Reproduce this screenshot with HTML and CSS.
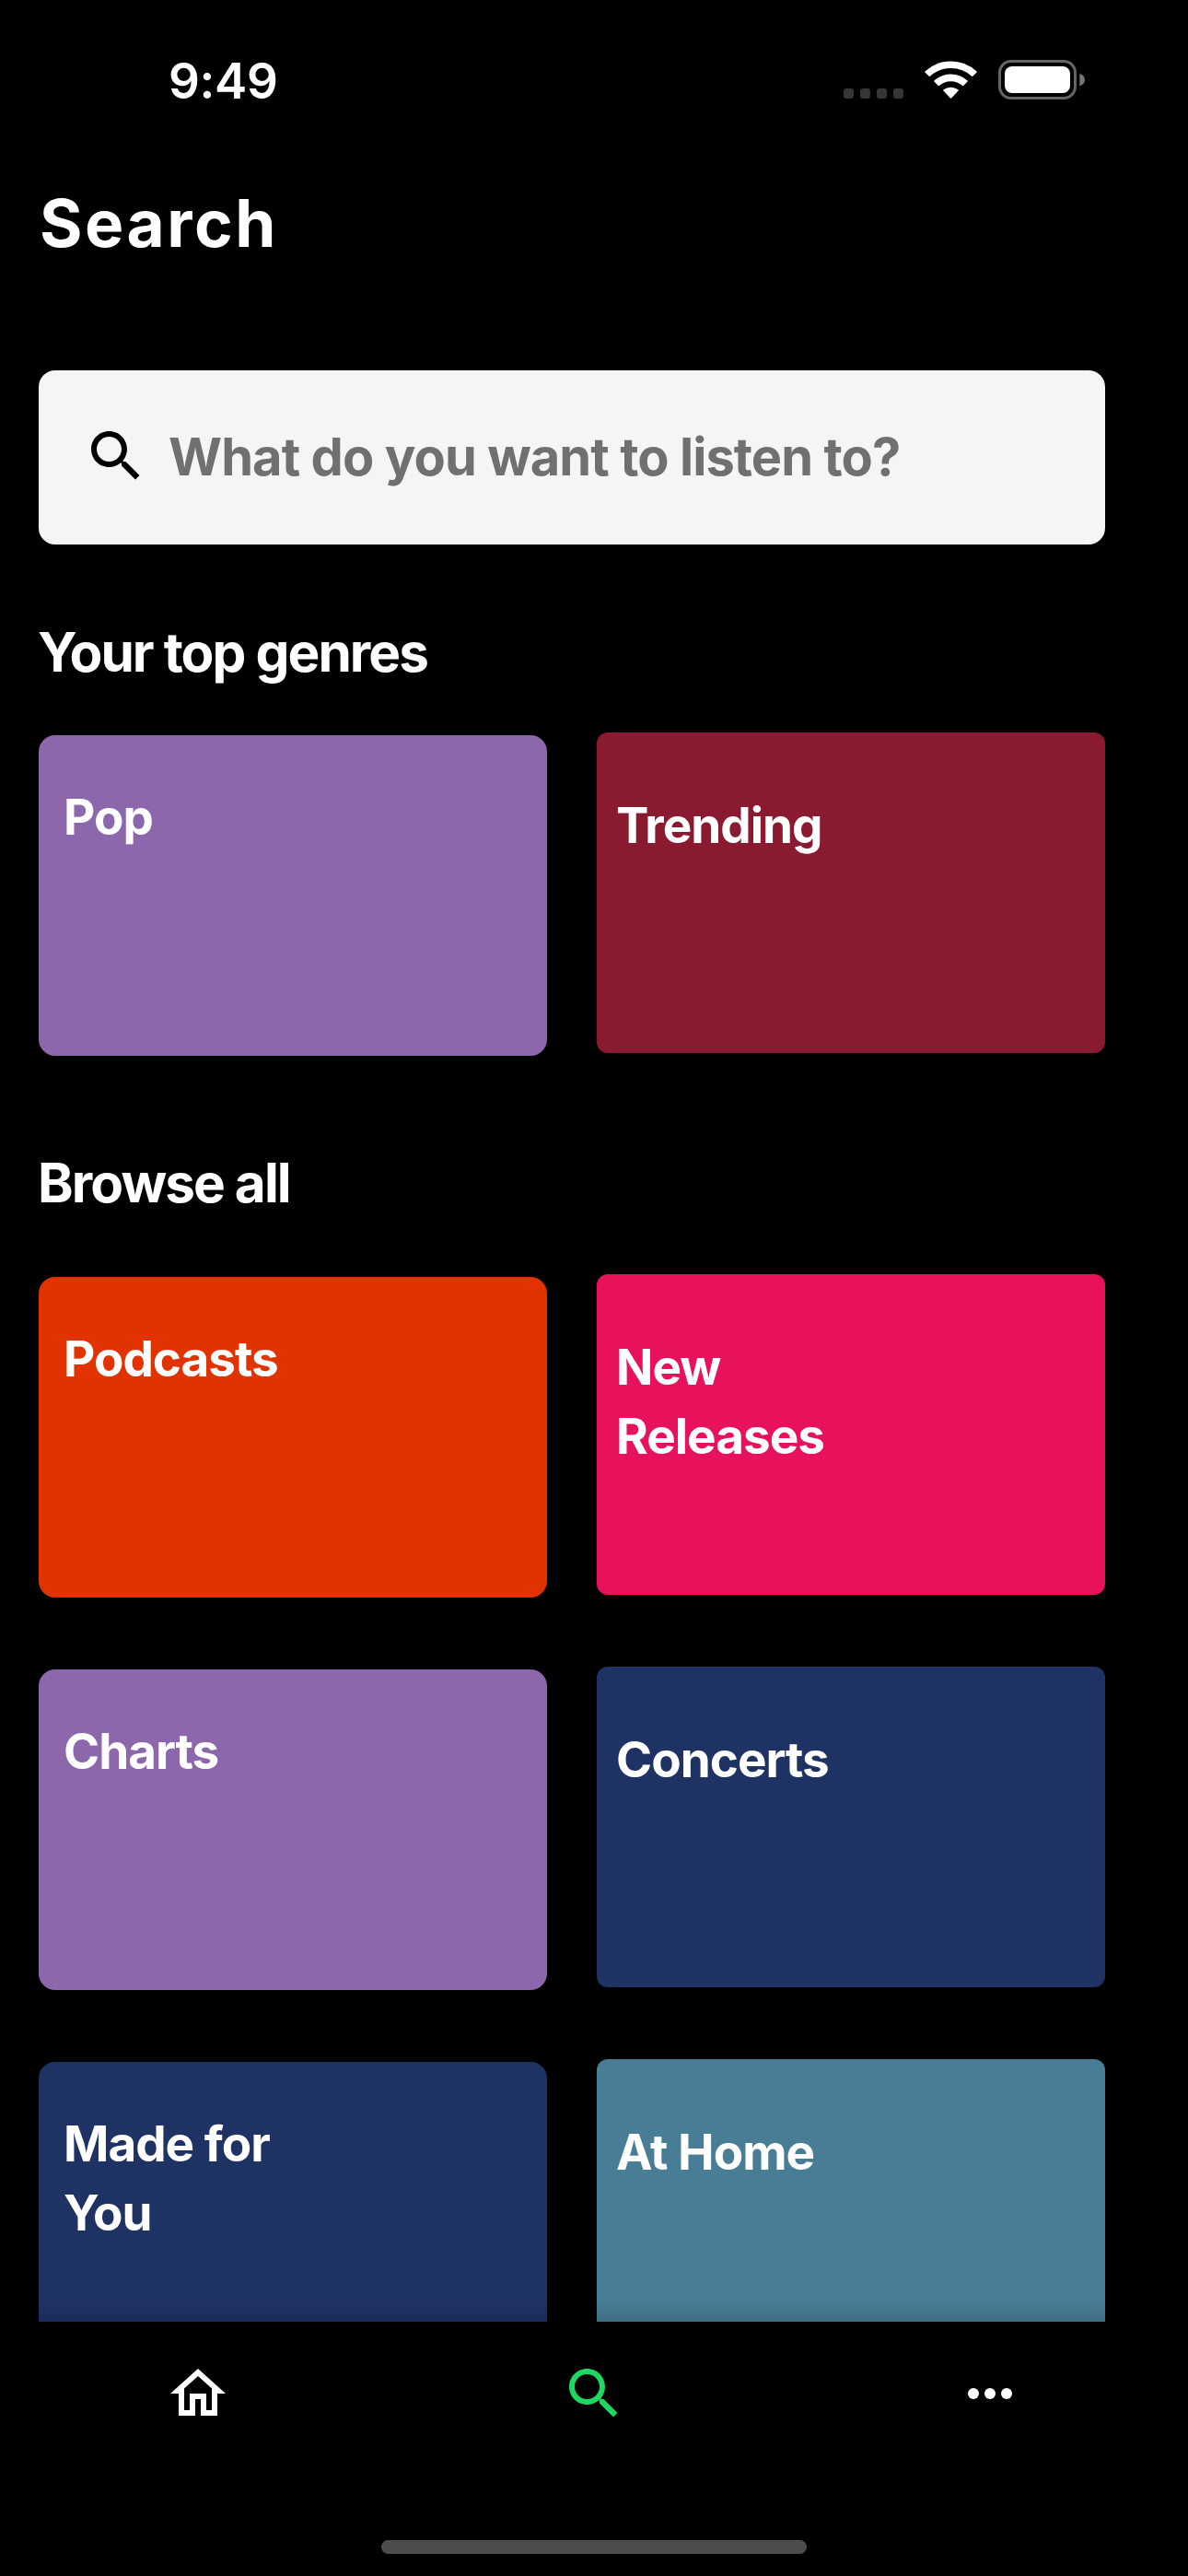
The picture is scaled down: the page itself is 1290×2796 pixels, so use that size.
FILE: index.html
```html
<!DOCTYPE html>
<html lang="en">
<head>
<meta charset="utf-8">
<title>Search</title>
<link rel="stylesheet" href="styles.css">
</head>
<body>
<div class="screen">
  <header class="status-bar">
    <span class="clock">9:49</span>
    <div class="status-icons">
      <svg class="cellular" width="65" height="11" viewBox="0 0 65 11" fill="#363636">
        <rect width="11" height="11" rx="3.2"/><rect x="18" width="11" height="11" rx="3.2"/><rect x="36" width="11" height="11" rx="3.2"/><rect x="54" width="11" height="11" rx="3.2"/>
      </svg>
      <svg class="wifi" width="58" height="42" viewBox="0 0 58 42">
        <g fill="#fff" stroke="#fff" stroke-width="1.6" stroke-linejoin="round">
          <path d="M1 13A40.6 40.6 0 0 1 56 13L51.7 17.2A34.6 34.6 0 0 0 5.3 17.2Z"/>
          <path d="M11 23A26.3 26.3 0 0 1 46 23L41.6 27.4A20 20 0 0 0 15.4 27.4Z"/>
          <path d="M21 33A12.5 12.5 0 0 1 36 33L28.5 41Z"/>
        </g>
      </svg>
      <svg class="battery" width="95" height="43" viewBox="0 0 95 43">
        <rect x="1.5" y="1.5" width="82" height="40" rx="12.5" fill="none" stroke="#656565" stroke-width="3"/>
        <rect x="7" y="7" width="71" height="29" rx="8" fill="#fff"/>
        <path d="M88.3 15C92 16.2 94 18.5 94 21.7S92 27.2 88.3 28.4Z" fill="#757575"/>
      </svg>
    </div>
  </header>

  <main class="content">
    <h1 class="title">Search</h1>

    <div class="search-box">
      <svg class="icon" viewBox="0 0 24 24"><path d="M15.5 14h-.79l-.28-.27C15.41 12.59 16 11.11 16 9.5 16 5.91 13.09 3 9.5 3S3 5.91 3 9.5 5.91 16 9.5 16c1.61 0 3.09-.59 4.23-1.57l.27.28v.79l5 4.99L20.49 19l-4.99-5zm-6 0C7.01 14 5 11.99 5 9.5S7.01 5 9.5 5 14 7.01 14 9.5 11.99 14 9.5 14z"/></svg>
      <span class="placeholder">What do you want to listen to?</span>
    </div>

    <h2 class="heading">Your top genres</h2>
    <div class="cards">
      <div class="card purple">Pop</div>
      <div class="card maroon">Trending</div>
    </div>

    <h2 class="heading browse">Browse all</h2>
    <div class="cards browse-cards">
      <div class="card orange">Podcasts</div>
      <div class="card pink">New<br>Releases</div>
      <div class="card purple">Charts</div>
      <div class="card navy">Concerts</div>
      <div class="card navy">Made for<br>You</div>
      <div class="card teal">At Home</div>
    </div>
    <div class="fade"></div>
  </main>

  <nav class="tab-bar">
    <div class="tabs">
      <svg class="icon" viewBox="0 0 24 24"><path d="M12 5.69l5 4.5V18h-2v-6H9v6H7v-7.81l5-4.5M12 3L2 12h3v8h6v-6h2v6h6v-8h3L12 3z"/></svg>
      <svg class="icon active" viewBox="0 0 24 24"><path d="M15.5 14h-.79l-.28-.27C15.41 12.59 16 11.11 16 9.5 16 5.91 13.09 3 9.5 3S3 5.91 3 9.5 5.91 16 9.5 16c1.61 0 3.09-.59 4.23-1.57l.27.28v.79l5 4.99L20.49 19l-4.99-5zm-6 0C7.01 14 5 11.99 5 9.5S7.01 5 9.5 5 14 7.01 14 9.5 11.99 14 9.5 14z"/></svg>
      <svg class="icon" viewBox="0 0 24 24"><circle cx="6" cy="12" r="2"/><circle cx="12" cy="12" r="2"/><circle cx="18" cy="12" r="2"/></svg>
    </div>
    <div class="home-indicator"></div>
  </nav>
</div>
</body>
</html>
```
FILE: styles.css
```css
* { box-sizing: border-box; margin: 0; padding: 0; }

body {
  background: #000;
  color: #fff;
  font-family: Inter, "Liberation Sans", sans-serif;
}

svg { display: block; flex: none; }

.screen {
  width: 1290px;
  height: 2796px;
  display: flex;
  flex-direction: column;
  overflow: hidden;
}

/* Status bar */
.status-bar {
  height: 177px;
  flex: none;
  display: flex;
  justify-content: space-between;
  align-items: flex-start;
  padding: 48px 111px 0 183px;
}

.clock {
  font-size: 53px;
  font-weight: 600;
  line-height: 80px;
  letter-spacing: -0.37px;
}

.status-icons {
  display: flex;
  align-items: flex-end;
  height: 60px;
}

.cellular { margin: 0 23px 1px 0; }
.wifi { margin: 0 22px 1px 0; }

/* Scrolling content */
.content {
  position: relative;
  height: 2343px;
  flex: none;
  padding: 20px 90px 0 42px;
  overflow: hidden;
}

.title {
  font-size: 71px;
  font-weight: 700;
  line-height: 90px;
  letter-spacing: 2.5px;
  padding-left: 1px;
}

.search-box {
  height: 189px;
  margin-top: 115px;
  padding: 0 48px;
  display: flex;
  align-items: center;
  gap: 21px;
  background: #f5f5f5;
  border-radius: 18px;
}

.icon { width: 72px; height: 72px; fill: #fff; }
.search-box .icon { fill: #000; margin-bottom: 3px; }

.placeholder {
  margin-bottom: 2px;
  color: #707070;
  font-size: 56px;
  font-weight: 700;
  line-height: 80px;
  letter-spacing: -0.93px;
}

.heading {
  margin: 77px 0 0 -1px;
  font-size: 58.5px;
  font-weight: 700;
  line-height: 80px;
  letter-spacing: -1.93px;
}

.heading.browse { margin-top: 98px; }

.cards {
  display: grid;
  grid-template-columns: 552px 552px;
  gap: 78px 54px;
  margin-top: 50px;
}

.browse-cards { margin-top: 62px; }

.card {
  height: 348px;
  padding: 52px 27px 0;
  border-radius: 18px;
  font-size: 53px;
  font-weight: 700;
  line-height: 75px;
  letter-spacing: -1px;
}

.card:nth-child(even) {
  margin-top: -3px;
  padding: 64px 21px 0;
  border-radius: 12px;
}

.purple { background: #8d67ab; }
.maroon { background: #8a1a2f; }
.orange { background: #e13300; }
.pink { background: #e8125c; }
.navy { background: #1f3264; }
.teal { background: #487d95; }

/* Shadow cast upwards by the tab bar */
.fade {
  position: absolute;
  left: 0;
  right: 0;
  bottom: 0;
  height: 22px;
  background: linear-gradient(to bottom, rgba(0, 0, 0, 0), rgba(0, 0, 0, 0.13));
}

/* Tab bar */
.tab-bar {
  flex: 1;
  display: flex;
  flex-direction: column;
  justify-content: space-between;
  align-items: center;
  padding: 42px 0 24px;
}

.tabs {
  width: 100%;
  display: grid;
  grid-template-columns: repeat(3, 1fr);
  justify-items: center;
}

.icon.active { fill: #1ed760; }

.home-indicator {
  width: 462px;
  height: 15px;
  border-radius: 8px;
  background: #4d4d4d;
}
```
